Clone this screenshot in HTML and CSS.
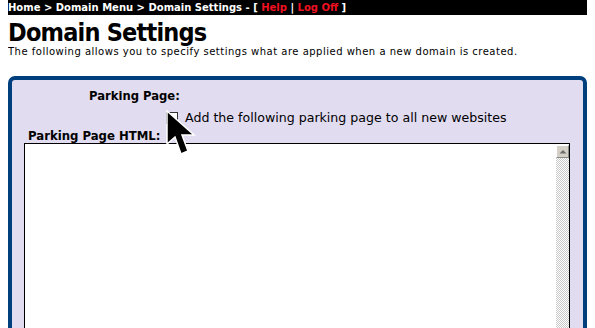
FILE: index.html
```html
<!DOCTYPE html>
<html>
<head>
<meta charset="utf-8">
<link rel="stylesheet" href="styles.css">
</head>
<body>
<div class="crumbs">Home &gt; Domain Menu &gt; Domain Settings - [ <span class="red">Help</span> | <span class="red">Log Off</span> ]</div>
<h1 class="title">Domain Settings</h1>
<p class="sub">The following allows you to specify settings what are applied when a new domain is created.</p>
<div class="box">
  <div class="label-row">Parking Page:</div>
  <div class="check-row"><span class="check"></span><span class="check-text">Add the following parking page to all new websites</span></div>
  <div class="html-label">Parking Page HTML:</div>
  <div class="textarea">
    <div class="area"></div>
    <div class="scroll">
      <div class="up"><svg width="8" height="5" viewBox="0 0 8 5"><path d="M0.5 4.5 L4 1 L7.5 4.5 Z" fill="#6c6c6c"/></svg></div>
    </div>
  </div>
  <svg class="cursor" width="34" height="48" viewBox="0 0 34 48">
    <path d="M1 1 L1 34 L9 27 L15 44 L22 41 L16 25 L28 25 Z" fill="#000" stroke="#fff" stroke-width="1.5" stroke-linejoin="miter"/>
  </svg>
</div>
</body>
</html>
```
FILE: styles.css
```css
html, body { margin: 0; padding: 0; background: #fff; }
body { margin: 0 8px; font-family: "DejaVu Sans", Verdana, sans-serif; color: #000; position: relative; }
.crumbs {
  background: #000; color: #fff; font-weight: bold; font-size: 10px;
  height: 15px; line-height: 15px; margin: 0 -8px; padding-left: 8px; white-space: nowrap;
}
.red { color: #f01020; }
.title { font-family: "DejaVu Sans Condensed", "DejaVu Sans", sans-serif; font-size: 25px; letter-spacing: -0.8px; font-weight: bold; margin: 4px 0 0 0; line-height: 27px; }
.sub { font-size: 10px; letter-spacing: 0.5px; margin: 0; line-height: 12px; }
.box {
  margin-top: 18px; height: 260px; box-sizing: border-box;
  border: 4px solid #003f7d; border-bottom: none; border-radius: 7px 7px 0 0;
  background: #e1dcf0; padding: 9px 13px 0 12px; position: relative;
}
.label-row { font-weight: bold; font-size: 11.6px; line-height: 14px; padding-left: 65px; }
.check-row { display: flex; align-items: center; padding-left: 142px; margin-top: 8px; height: 14px; }
.check { width: 10px; height: 10px; border: 1px solid #333; background: #fff; display: inline-block; }
.check-text { font-size: 12.6px; margin-left: 7px; line-height: 14px; }
.html-label { font-weight: bold; font-size: 11.7px; line-height: 14px; padding-left: 4px; margin-top: 4px; }
.textarea { display: flex; height: 200px; border: 1px solid #000; border-bottom: none; background: #fff; margin-top: 0px; }
.area { flex: 1; }
.scroll { width: 13px; margin: 1px 0 0 0;
  background: repeating-conic-gradient(#c8c8c8 0 25%, #ffffff 0 50%) 0 0/2px 2px; }
.up { height: 11px; width: 11px; border: 1px solid; border-color: #fff #888 #888 #fff; background: #d4d0c8; display: flex; align-items: center; justify-content: center; }
.cursor { position: absolute; left: 154px; top: 30px; }
```
